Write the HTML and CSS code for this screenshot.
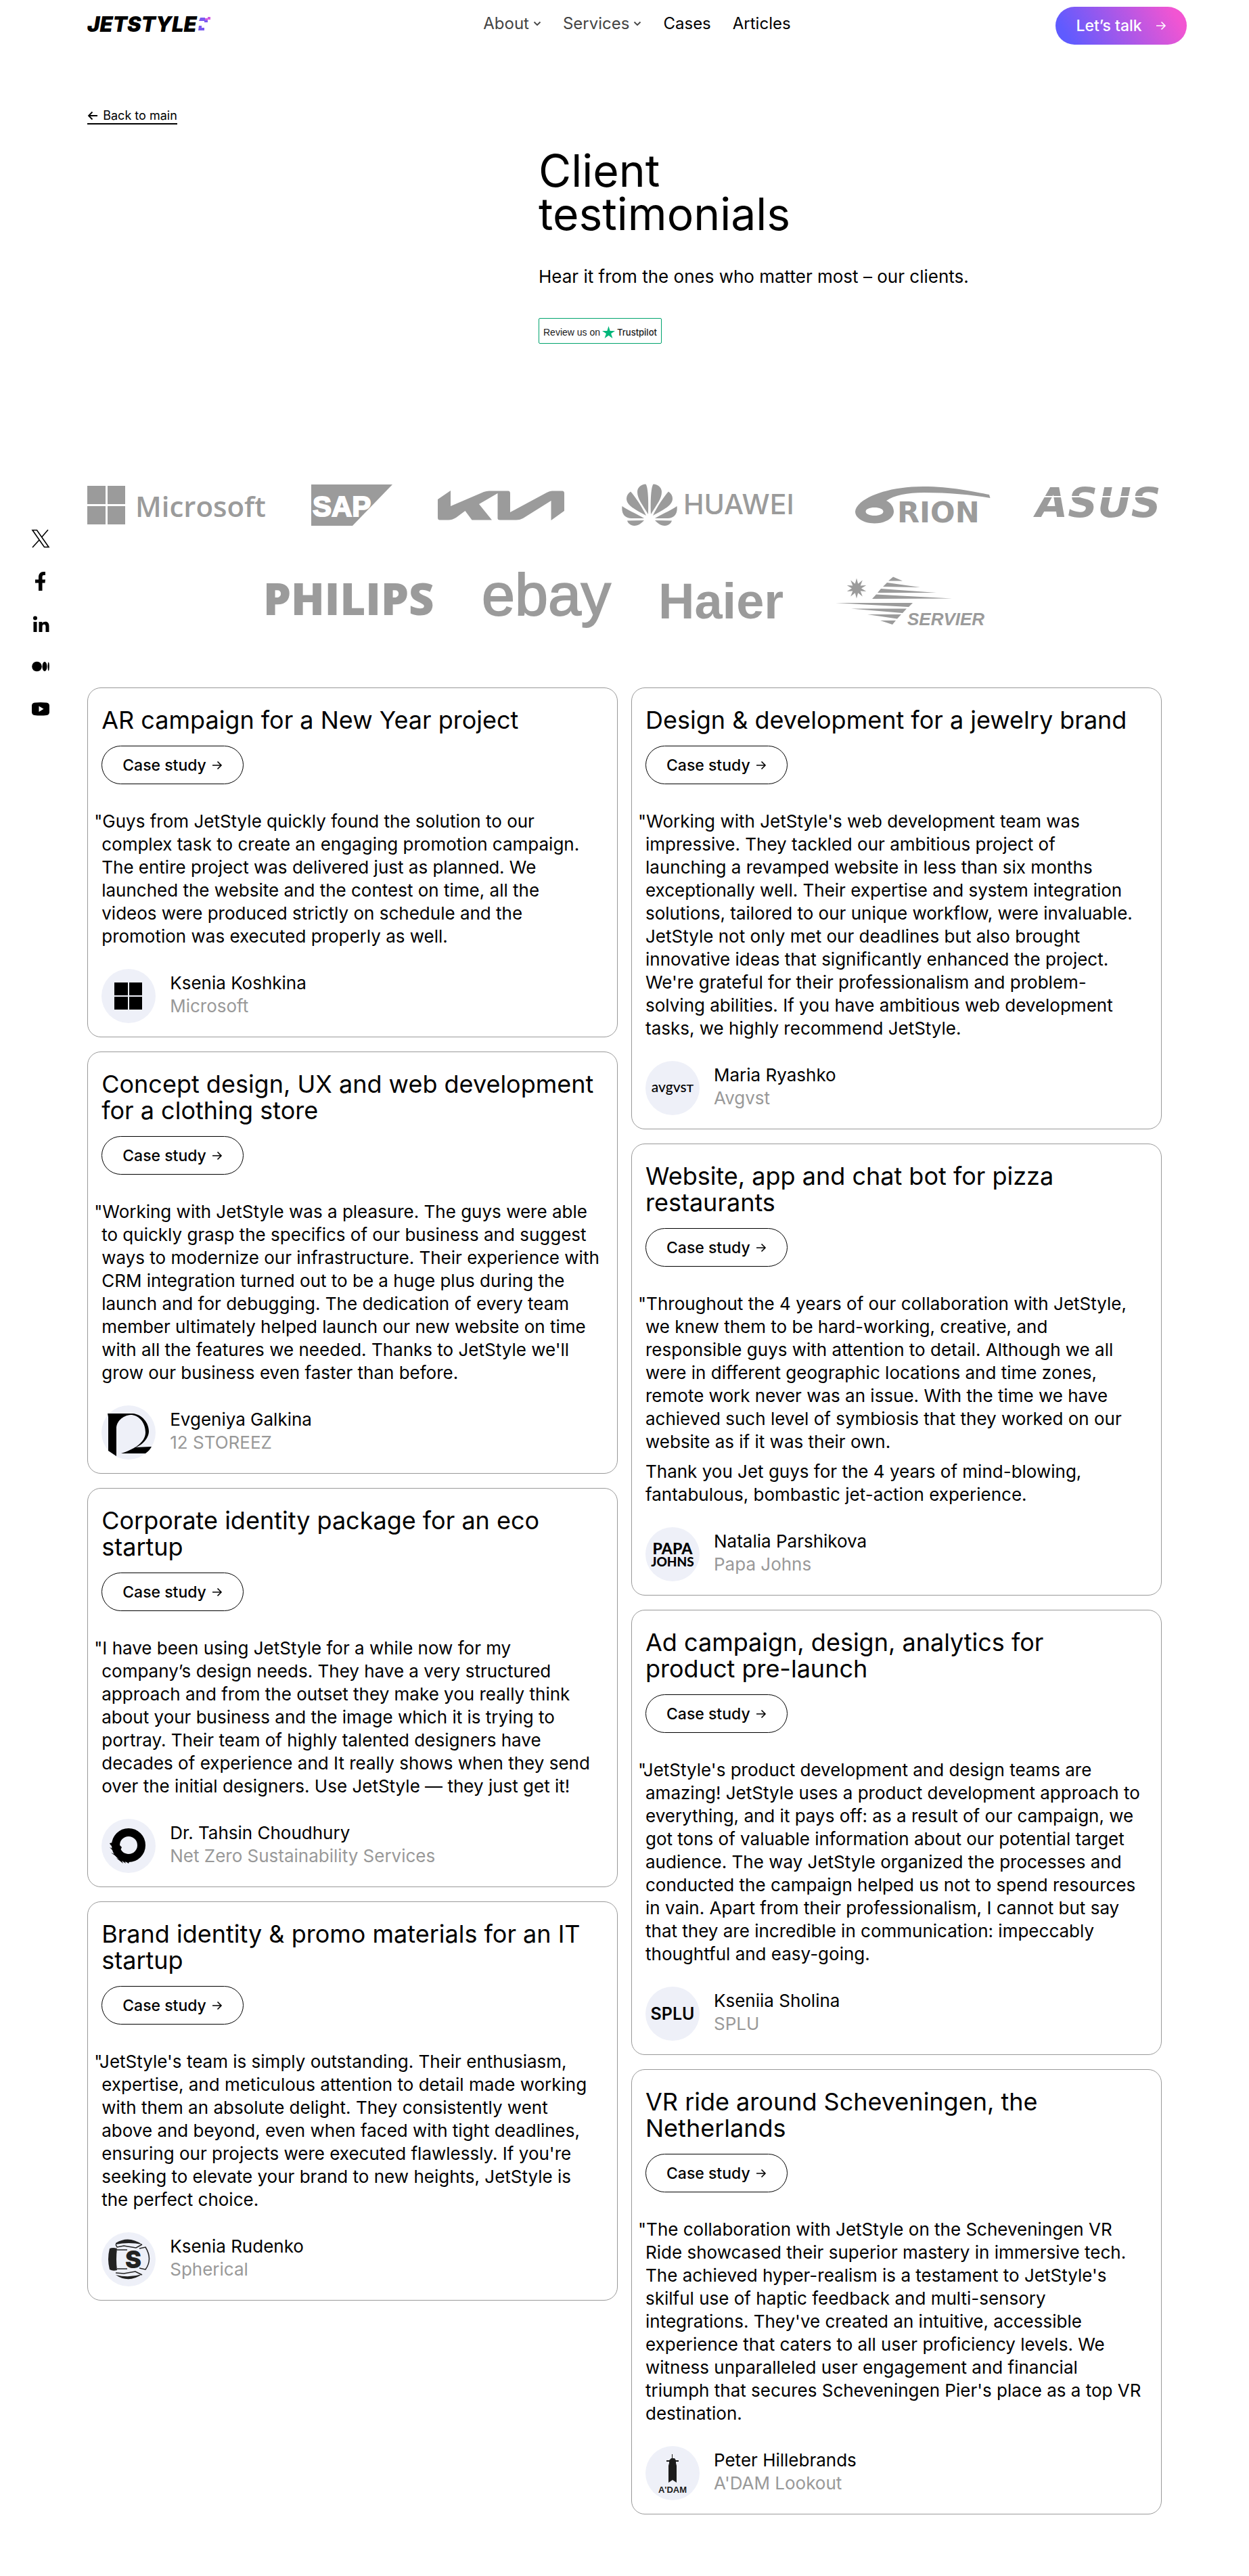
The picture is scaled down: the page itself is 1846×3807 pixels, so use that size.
FILE: index.html
```html
<!DOCTYPE html>
<html lang="en">
<head>
<meta charset="utf-8">
<meta name="viewport" content="width=device-width, initial-scale=1">
<title>Client testimonials – JetStyle</title>
<link rel="stylesheet" href="styles.css">
</head>
<body>
<svg class="defs" aria-hidden="true">
  <symbol id="arrow" viewBox="0 0 16 14"><path d="M1 7H14M8.500 1.500L14 7L8.500 12.500" fill="none" stroke="currentColor" stroke-width="1.600"/></symbol>
  <symbol id="caret" viewBox="0 0 12 8"><path d="M1.500 1.500L6 6L10.500 1.500" fill="none" stroke="currentColor" stroke-width="1.800"/></symbol>
</svg>

<header class="header">
  <a class="logo" href="#" aria-label="JetStyle">
    <svg width="184" height="26" viewBox="0 0 184 26">
      <text class="logo-text" x="0" y="24">JETSTYLE</text>
      <g fill="#7a5af0"><path d="M167 3h7v3h4v4h-5v-2h-8zM165 15h4v3h4v4h-9z"/></g>
      <g fill="#d15be0"><path d="M174 4h4v3h-4zM178 2h4v4h-4z"/></g>
    </svg>
  </a>
  <nav class="nav">
    <a class="nav-link nav-link-muted" href="#">About <svg width="12" height="8"><use href="#caret"/></svg></a>
    <a class="nav-link nav-link-muted" href="#">Services <svg width="12" height="8"><use href="#caret"/></svg></a>
    <a class="nav-link" href="#">Cases</a>
    <a class="nav-link" href="#">Articles</a>
  </nav>
  <button class="talk" type="button">Let’s talk <svg width="16" height="14"><use href="#arrow"/></svg></button>
</header>

<main>
  <section class="hero">
    <a class="back" href="#"><svg width="16" height="14" viewBox="0 0 16 14"><path d="M15 7H2M7.500 1.500L2 7L7.500 12.500" fill="none" stroke="currentColor" stroke-width="1.800"/></svg>Back to main</a>
    <div class="hero-text">
      <h1 class="title">Client<br>testimonials</h1>
      <p class="lead">Hear it from the ones who matter most – our clients.</p>
      <a class="trust" href="#">Review us on
        <svg width="19" height="18" viewBox="0 0 19 18"><path fill="#00b67a" d="M9.500 0L11.700 6.900H19L13.100 11.100L15.400 18L9.500 13.700L3.600 18L5.900 11.100L0 6.900H7.300Z"/></svg>
        <span class="trust-name">Trustpilot</span></a>
    </div>
  </section>

  <section class="showcase">
    <aside class="social">
      <a href="#" aria-label="X"><svg width="28" height="28" viewBox="0 0 28 28"><path d="M2 1.500H8.500L26 26.500H19.500ZM25 1L15.500 12M12 16L2 27" fill="none" stroke="#000" stroke-width="1.600"/></svg></a>
      <a href="#" aria-label="Facebook"><svg width="28" height="28" viewBox="0 0 28 28"><path d="M11 28V16.500H6V11.500H11V8C11 3 14 0 18 0H21V5H19C17 5 16.500 6 16.500 8V11.500H21L20.500 16.500H16.500V28Z"/></svg></a>
      <a href="#" aria-label="LinkedIn"><svg width="28" height="28" viewBox="0 0 28 28"><circle cx="6" cy="5.500" r="3"/><path d="M3.500 11H8.500V26H3.500ZM11.500 11H16.300V13C19 9.500 26.500 9.500 26.500 17V26H21.500V18C21.500 13.500 16.500 14 16.500 18V26H11.500Z"/></svg></a>
      <a href="#" aria-label="Medium"><svg width="28" height="28" viewBox="0 0 28 28"><circle cx="8.500" cy="14" r="7.300"/><ellipse cx="20" cy="14" rx="3.500" ry="7"/><ellipse cx="25.700" cy="14" rx="1.200" ry="6.500"/></svg></a>
      <a href="#" aria-label="YouTube"><svg width="28" height="28" viewBox="0 0 28 28"><path fill-rule="evenodd" d="M5 4.500Q14 3.500 23 4.500Q27 5 27 9V18Q27 22.500 23 23Q14 24 5 23Q1 22.500 1 18V9Q1 5 5 4.500ZM11.500 9.500V18L18.500 13.700Z"/></svg></a>
    </aside>

    <div class="content">
      <div class="clients">
        <div class="clients-row">
          <svg width="264" height="62" viewBox="0 0 264 62" role="img" aria-label="Microsoft"><path d="M0 3H27V30H0ZM30 3H56V30H30ZM0 33H27V60H0ZM30 33H56V60H30Z"/><text class="mark-microsoft" x="71" y="49">Microsoft</text></svg>
          <svg width="120" height="62" viewBox="0 0 120 62" role="img" aria-label="SAP"><path d="M0 1H120L61 62H0Z"/><text class="mark-sap" x="2" y="48">SAP</text></svg>
          <svg width="205" height="62" viewBox="0 0 205 62" role="img" aria-label="KIA"><path d="M19 10V33L68 12Q72 10.500 76 10.500H104Q107 10.500 107 14V42L161 13Q165 10.500 169 10.500H184Q187 10.500 187 14V40L167.500 54V25L126 51Q121 53.500 116 53.500H92Q88.500 53.500 88.500 51V14L61 30L80 53.500H50.500L40.500 40L27 50Q21 53.500 16 53.500H3Q0 53.500 0 50V23Z"/></svg>
          <svg width="260" height="62" viewBox="0 0 260 62" role="img" aria-label="Huawei">
            <g id="petals"><path d="M39 45C30 30 23 22 23 12C23 5 29 1 35 .5C38 1 40 20 39 45Z"/><path d="M13 11.500C19 18 30 34 36 47C20 38 7 32 7 22C7 18 9 14 13 11.500Z"/><path d="M.5 33C-1 47 7 51 14 51H33C22 44 10 40 .5 33Z"/><path d="M8 54.500L33 54C29 58 25 62 18.500 62C13 62 9 58 8 54.500Z"/></g>
            <use href="#petals" transform="translate(82) scale(-1 1)"/>
            <text class="mark-huawei" x="91" y="45">HUAWEI</text></svg>
          <svg width="218" height="62" viewBox="0 0 218 62" role="img" aria-label="Orion"><path fill-rule="evenodd" d="M18 41C19 24 60 4 118 4C160 4 195 12 216 16L217.500 21C190 16 155 13 120 13C95 13 75 17 64 25C71 28 75 35 75 41C75 51 62 58.500 46.500 58.500C31 58.500 18 51 18 41ZM33.500 41C33.500 44.500 39 47 46.500 47C54 47 59.500 44.500 59.500 41C59.500 37.500 54 35 46.500 35C39 35 33.500 37.500 33.500 41Z"/><text class="mark-orion" x="80" y="57">RION</text></svg>
          <svg width="186" height="62" viewBox="0 0 186 62" role="img" aria-label="Asus"><text class="mark-asus" x="0" y="49">ASUS</text><path d="M10 18L186 18V20L10 20Z" fill="#fff"/></svg>
        </div>
        <div class="clients-row clients-row-center">
          <svg width="249" height="78" viewBox="0 0 249 78" role="img" aria-label="Philips"><text class="mark-philips" x="-5" y="62">PHILIPS</text></svg>
          <svg width="193" height="78" viewBox="0 0 193 78" role="img" aria-label="ebay"><text class="mark-ebay" x="-2" y="62">ebay</text></svg>
          <svg width="186" height="78" viewBox="0 0 186 78" role="img" aria-label="Haier"><text class="mark-haier" x="-5" y="67">Haier</text></svg>
          <svg width="218" height="78" viewBox="0 0 218 78" role="img" aria-label="Servier"><path d="M31 7.500L33.200 15.800L39.800 10.400L36.700 18.400L45.300 17.900L38 22.500L45.300 27.100L36.700 26.600L39.800 34.600L33.200 29.200L31 37.500L28.800 29.200L22.200 34.600L25.300 26.600L16.700 27.100L24 22.500L16.700 17.900L25.300 18.400L22.200 10.400L28.800 15.800Z"/><path d="M85 5.500L99 11.500H78ZM76 14L125 21L70 20ZM67 23L149 29H62ZM60 31.500L172 37.500L54 38ZM0 44H114L108 50ZM23 52.500H105L99 59ZM47 61H97L91 67.500ZM66 70H89L84 76Z"/><text class="mark-servier" x="106" y="77">SERVIER</text></svg>
        </div>
      </div>

      <div class="cards">
        <div class="column">
          <article class="card">
            <h2 class="card-title">AR campaign for a New Year project</h2>
            <a class="case" href="#">Case study <svg width="16" height="14"><use href="#arrow"/></svg></a>
            <blockquote class="quote"><p>"Guys from JetStyle quickly found the solution to our<br>complex task to create an engaging promotion campaign.<br>The entire project was delivered just as planned. We<br>launched the website and the contest on time, all the<br>videos were produced strictly on schedule and the<br>promotion was executed properly as well.</p></blockquote>
            <footer class="author">
              <svg class="avatar" width="80" height="80" viewBox="0 0 80 80"><path d="M19 20H39V39H19ZM41 20H60V39H41ZM19 41H39V60H19ZM41 41H60V60H41Z"/></svg>
              <p class="author-text">Ksenia Koshkina<span class="company">Microsoft</span></p>
            </footer>
          </article>
          <article class="card">
            <h2 class="card-title">Concept design, UX and web development<br>for a clothing store</h2>
            <a class="case" href="#">Case study <svg width="16" height="14"><use href="#arrow"/></svg></a>
            <blockquote class="quote"><p>"Working with JetStyle was a pleasure. The guys were able<br>to quickly grasp the specifics of our business and suggest<br>ways to modernize our infrastructure. Their experience with<br>CRM integration turned out to be a huge plus during the<br>launch and for debugging. The dedication of every team<br>member ultimately helped launch our new website on time<br>with all the features we needed. Thanks to JetStyle we'll<br>grow our business even faster than before.</p></blockquote>
            <footer class="author">
              <svg class="avatar" width="80" height="80" viewBox="0 0 80 80"><path d="M9 12H46C60 13 70 26 70 38C70 50 58 60 50 62L74 61C72 65 69 68 65 71H29C45 66 65 56 65 40C65 24 54 14 43 14C31 15 22 24 22 34V75L10 67V17Z"/></svg>
              <p class="author-text">Evgeniya Galkina<span class="company">12 STOREEZ</span></p>
            </footer>
          </article>
          <article class="card">
            <h2 class="card-title">Corporate identity package for an eco<br>startup</h2>
            <a class="case" href="#">Case study <svg width="16" height="14"><use href="#arrow"/></svg></a>
            <blockquote class="quote"><p>"I have been using JetStyle for a while now for my<br>company’s design needs. They have a very structured<br>approach and from the outset they make you really think<br>about your business and the image which it is trying to<br>portray. Their team of highly talented designers have<br>decades of experience and It really shows when they send<br>over the initial designers. Use JetStyle — they just get it!</p></blockquote>
            <footer class="author">
              <svg class="avatar" width="80" height="80" viewBox="0 0 80 80"><circle cx="40" cy="39" r="19" fill="none" stroke="#000" stroke-width="12"/><path d="M12 36L22 34L30 42L26 50L38 52L44 56L40 66L34 62L36 66L30 62L32 66L22 58L28 60L14 50L24 54L12 42L20 46L13 38Z"/></svg>
              <p class="author-text">Dr. Tahsin Choudhury<span class="company">Net Zero Sustainability Services</span></p>
            </footer>
          </article>
          <article class="card">
            <h2 class="card-title">Brand identity &amp; promo materials for an IT<br>startup</h2>
            <a class="case" href="#">Case study <svg width="16" height="14"><use href="#arrow"/></svg></a>
            <blockquote class="quote"><p>"JetStyle's team is simply outstanding. Their enthusiasm,<br>expertise, and meticulous attention to detail made working<br>with them an absolute delight. They consistently went<br>above and beyond, even when faced with tight deadlines,<br>ensuring our projects were executed flawlessly. If you're<br>seeking to elevate your brand to new heights, JetStyle is<br>the perfect choice.</p></blockquote>
            <footer class="author">
              <svg class="avatar" width="80" height="80" viewBox="0 0 80 80"><g fill="#222"><path d="M12 24Q17 22 23 24Q21 40 23 56Q17 58 12 55Q8 40 12 24Z"/><path d="M21 16Q40 4 60 18Q40 14 21 18ZM21 63Q40 68 60 62Q40 76 21 63Z"/></g><g fill="none" stroke="#222" stroke-width="1.500"><path d="M21 18L23 22L33 20L51 23L60 18M21 60L33 61L50 58L60 63M23 26H38M23 54H38M56 24L65 22Q76 40 65 55L56 53"/></g><text class="avatar-s" x="35" y="53">S</text></svg>
              <p class="author-text">Ksenia Rudenko<span class="company">Spherical</span></p>
            </footer>
          </article>
        </div>

        <div class="column">
          <article class="card">
            <h2 class="card-title">Design &amp; development for a jewelry brand</h2>
            <a class="case" href="#">Case study <svg width="16" height="14"><use href="#arrow"/></svg></a>
            <blockquote class="quote"><p>"Working with JetStyle's web development team was<br>impressive. They tackled our ambitious project of<br>launching a revamped website in less than six months<br>exceptionally well. Their expertise and system integration<br>solutions, tailored to our unique workflow, were invaluable.<br>JetStyle not only met our deadlines but also brought<br>innovative ideas that significantly enhanced the project.<br>We're grateful for their professionalism and problem-<br>solving abilities. If you have ambitious web development<br>tasks, we highly recommend JetStyle.</p></blockquote>
            <footer class="author">
              <svg class="avatar" width="80" height="80" viewBox="0 0 80 80"><text class="avatar-avgvst" x="40" y="46">avgvsт</text></svg>
              <p class="author-text">Maria Ryashko<span class="company">Avgvst</span></p>
            </footer>
          </article>
          <article class="card">
            <h2 class="card-title">Website, app and chat bot for pizza<br>restaurants</h2>
            <a class="case" href="#">Case study <svg width="16" height="14"><use href="#arrow"/></svg></a>
            <blockquote class="quote"><p>"Throughout the 4 years of our collaboration with JetStyle,<br>we knew them to be hard-working, creative, and<br>responsible guys with attention to detail. Although we all<br>were in different geographic locations and time zones,<br>remote work never was an issue. With the time we have<br>achieved such level of symbiosis that they worked on our<br>website as if it was their own.</p><p>Thank you Jet guys for the 4 years of mind-blowing,<br>fantabulous, bombastic jet-action experience.</p></blockquote>
            <footer class="author">
              <svg class="avatar" width="80" height="80" viewBox="0 0 80 80"><text class="avatar-papa" x="40" y="40">PAPA</text><text class="avatar-johns" x="40" y="58">JOHNS</text></svg>
              <p class="author-text">Natalia Parshikova<span class="company">Papa Johns</span></p>
            </footer>
          </article>
          <article class="card">
            <h2 class="card-title">Ad campaign, design, analytics for<br>product pre-launch</h2>
            <a class="case" href="#">Case study <svg width="16" height="14"><use href="#arrow"/></svg></a>
            <blockquote class="quote"><p>"JetStyle's product development and design teams are<br>amazing! JetStyle uses a product development approach to<br>everything, and it pays off: as a result of our campaign, we<br>got tons of valuable information about our potential target<br>audience. The way JetStyle organized the processes and<br>conducted the campaign helped us not to spend resources<br>in vain. Apart from their professionalism, I cannot but say<br>that they are incredible in communication: impeccably<br>thoughtful and easy-going.</p></blockquote>
            <footer class="author">
              <svg class="avatar" width="80" height="80" viewBox="0 0 80 80"><text class="avatar-splu" x="40" y="49">SPLU</text></svg>
              <p class="author-text">Kseniia Sholina<span class="company">SPLU</span></p>
            </footer>
          </article>
          <article class="card">
            <h2 class="card-title">VR ride around Scheveningen, the<br>Netherlands</h2>
            <a class="case" href="#">Case study <svg width="16" height="14"><use href="#arrow"/></svg></a>
            <blockquote class="quote"><p>"The collaboration with JetStyle on the Scheveningen VR<br>Ride showcased their superior mastery in immersive tech.<br>The achieved hyper-realism is a testament to JetStyle's<br>skilful use of haptic feedback and multi-sensory<br>integrations. They've created an intuitive, accessible<br>experience that caters to all user proficiency levels. We<br>witness unparalleled user engagement and financial<br>triumph that secures Scheveningen Pier's place as a top VR<br>destination.</p></blockquote>
            <footer class="author">
              <svg class="avatar" width="80" height="80" viewBox="0 0 80 80"><g fill="#1c1c1c"><path d="M39 12h1v6h3l2 3h4v2h-4v2l1 4v25l-6-4l-6 4V29l1-4v-2h-4v-2h4l3-3h1z"/></g><text class="avatar-adam" x="40" y="69">A'DAM</text></svg>
              <p class="author-text">Peter Hillebrands<span class="company">A'DAM Lookout</span></p>
            </footer>
          </article>
        </div>
      </div>
    </div>
  </section>
</main>
</body>
</html>
```
FILE: styles.css
```css
* {
  box-sizing: border-box;
}

body {
  margin: 0;
  background: #fff;
  color: #000;
  font-family: Inter, "Liberation Sans", sans-serif;
  font-size: 26px;
  line-height: 34px;
}

h1,
h2,
p,
blockquote {
  margin: 0;
  font-weight: 400;
}

a {
  color: inherit;
  text-decoration: none;
}

svg {
  display: block;
  flex: none;
  overflow: visible;
}

.defs {
  position: absolute;
  width: 0;
  height: 0;
}

/* Header */
.header {
  display: grid;
  grid-template-columns: 1fr auto 1fr;
  align-items: center;
  padding: 10px 5% 0 7%;
}

.logo {
  padding-bottom: 4px;
}

.logo-text {
  font-size: 31px;
  font-style: italic;
  font-weight: 900;
}

.nav {
  display: flex;
  gap: 32px;
  padding-bottom: 6px;
}

.nav-link {
  display: flex;
  align-items: center;
  gap: 6px;
  font-size: 24px;
}

.nav-link-muted {
  color: #444;
}

.talk {
  display: flex;
  align-items: center;
  justify-self: end;
  gap: 20px;
  height: 56px;
  padding: 0 30px;
  border: 0;
  border-radius: 28px;
  background: linear-gradient(60deg, #5f5bff 10%, #f255d2 90%);
  color: #fff;
  font: 500 23px Inter, sans-serif;
}

/* Hero */
.hero {
  display: flex;
  flex-direction: column;
  align-items: flex-start;
  padding: 94px 7% 0;
}

.back {
  display: flex;
  align-items: center;
  gap: 7px;
  border-bottom: 2px solid #000;
  font-size: 18px;
  line-height: 22px;
}

.hero-text {
  padding-top: 36px;
  margin-left: 42%;
}

.title {
  font-size: 66px;
  line-height: 64px;
}

.lead {
  padding: 44px 0;
}

.trust {
  display: inline-flex;
  align-items: center;
  gap: 3px;
  height: 38px;
  padding: 4px 6px 0;
  border: 1px solid #00a36d;
  border-radius: 2px;
  color: #191919;
  font: 14px "Liberation Sans", sans-serif;
  vertical-align: top;
}

.trust-name {
  font: 500 13px Inter, sans-serif;
}

/* Client logos and testimonials */
.showcase {
  display: grid;
  grid-template-columns: 7vw 1fr;
  padding: 207px 7% 91px 0;
}

.social {
  display: flex;
  flex-direction: column;
  gap: 35px;
  padding: 67px 0 0 46px;
}

.clients {
  display: grid;
  gap: 70px;
  padding-bottom: 91px;
  fill: #9b9b9b;
}

.clients-row {
  display: flex;
  flex-wrap: wrap;
  justify-content: space-between;
}

.clients-row-center {
  justify-content: center;
  gap: 71px;
}

.mark-microsoft {
  font: 600 42px "Open Sans", sans-serif;
}

.mark-sap {
  fill: #fff;
  stroke: #fff;
  stroke-width: 2;
  font: 700 42px "Liberation Sans", sans-serif;
}

.mark-huawei {
  font: 500 41px Inter, sans-serif;
}

.mark-orion {
  font: 700 43px "DejaVu Sans", sans-serif;
}

.mark-asus {
  font: italic 700 61px "DejaVu Sans", sans-serif;
}

.mark-philips {
  font: 800 65px "Open Sans", sans-serif;
}

.mark-ebay {
  stroke: #9b9b9b;
  stroke-width: 2;
  font: 400 88px "Liberation Sans", sans-serif;
}

.mark-haier {
  font: 700 74px "Liberation Sans", sans-serif;
}

.mark-servier {
  font: italic 700 26px "Liberation Sans", sans-serif;
}

.cards {
  display: grid;
  grid-template-columns: 1fr 1fr;
  align-items: start;
  gap: 20px;
}

.column {
  display: grid;
  gap: 21px;
}

.card {
  padding: 28px 20px 20px;
  border: 1px solid #999;
  border-radius: 20px;
}

.card-title {
  font-size: 36px;
  line-height: 39px;
}

.case {
  display: inline-flex;
  align-items: center;
  gap: 8px;
  height: 57px;
  margin-top: 18px;
  padding: 0 30px;
  border: 1px solid #000;
  border-radius: 29px;
  font-size: 23px;
  font-weight: 500;
  vertical-align: top;
}

.quote {
  padding: 38px 0 31px;
}

.quote p:first-child {
  text-indent: -11px;
}

.quote p + p {
  margin-top: 10px;
}

.author {
  display: flex;
  gap: 21px;
}

.avatar {
  border-radius: 50%;
  background: #eef0f8;
}

.author-text {
  padding-top: 4px;
}

.company {
  display: block;
  color: #999;
}

.avatar text {
  text-anchor: middle;
}

.avatar .avatar-s {
  fill: #222;
  font: 900 36px Inter, sans-serif;
  text-anchor: start;
}

.avatar-avgvst {
  font: 500 21px Lato, sans-serif;
}

.avatar-papa {
  font: 900 23px Lato, sans-serif;
}

.avatar-johns {
  font: 900 19px Lato, sans-serif;
}

.avatar-splu {
  font: 600 25px Inter, sans-serif;
}

.avatar-adam {
  fill: #1c1c1c;
  font: 700 13px "Liberation Sans", sans-serif;
}
```
